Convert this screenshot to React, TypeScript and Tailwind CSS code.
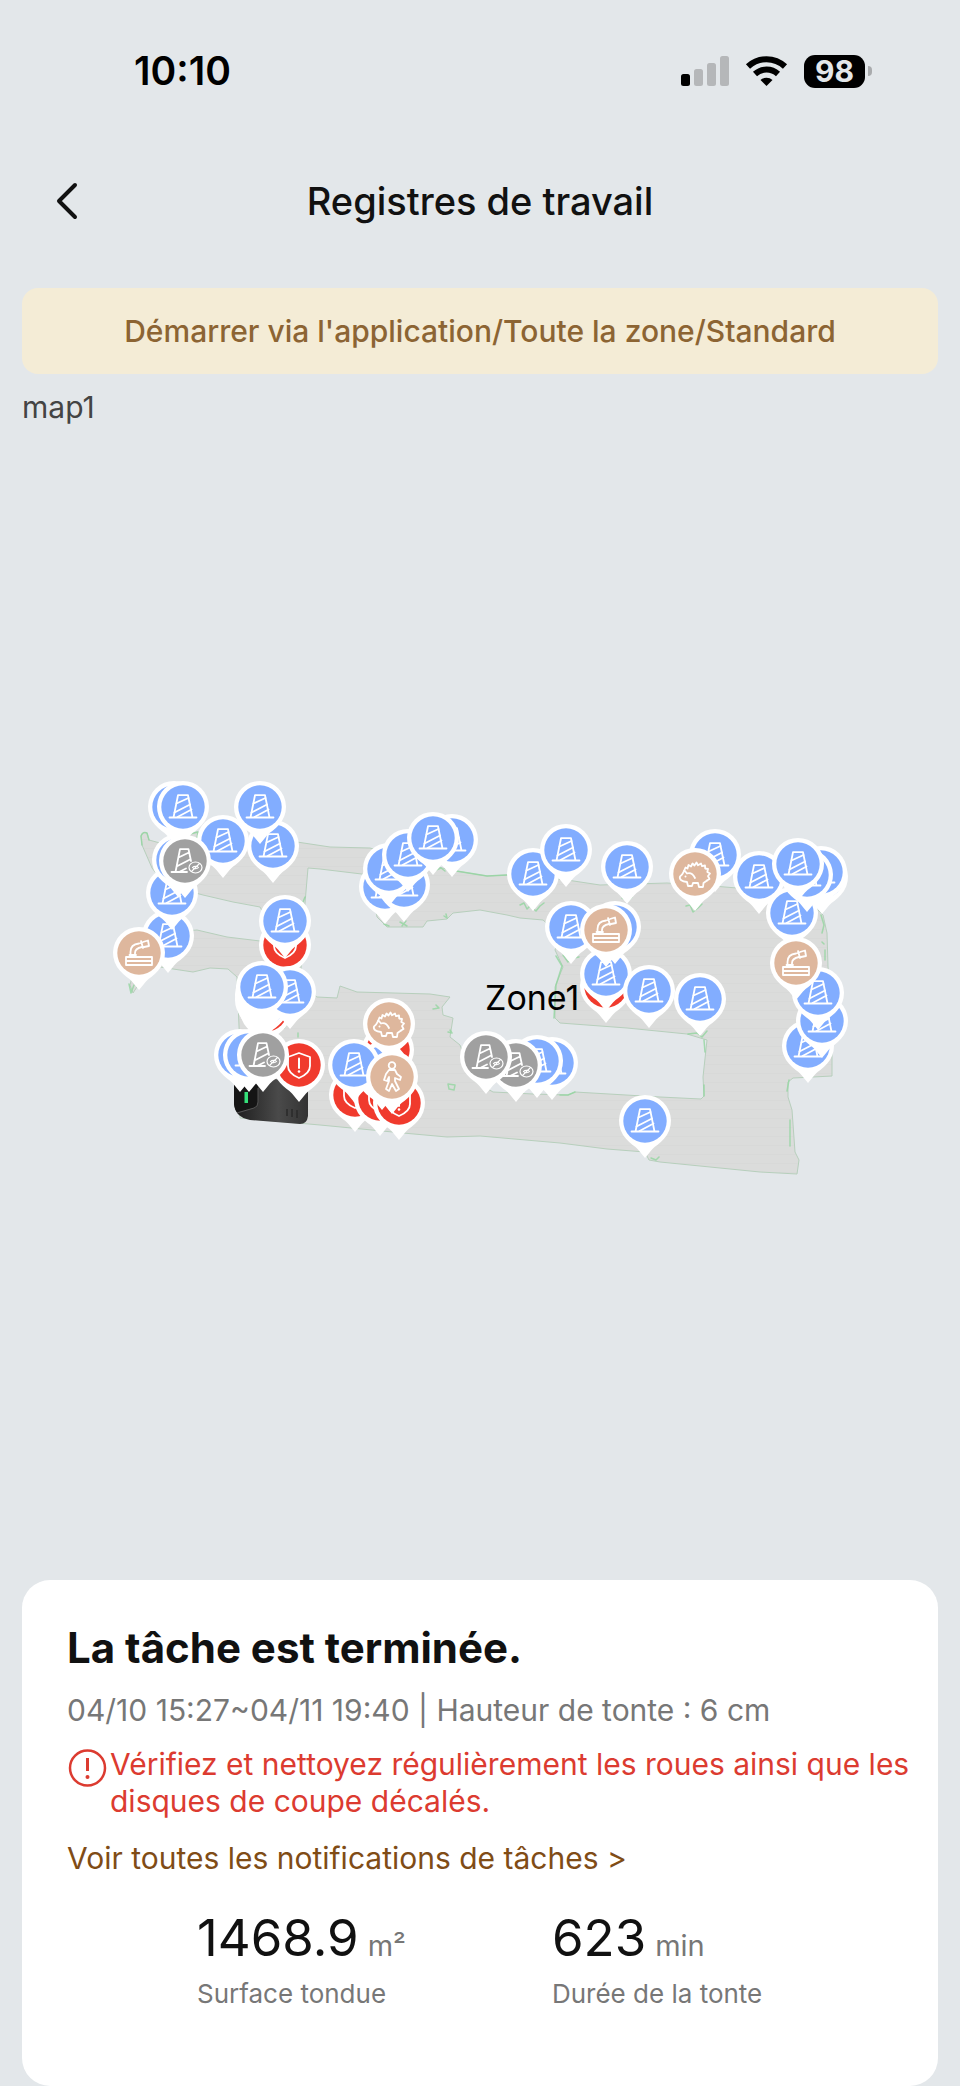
type PinKind = 'cone' | 'muted' | 'alert' | 'hose' | 'hedgehog' | 'person';

type Pin = { kind: PinKind; x: number; y: number };

const PIN_FILL: Record<PinKind, string> = {
  cone: '#82adff',
  muted: '#a0a0a0',
  alert: '#f03a2d',
  hose: '#deb79d',
  hedgehog: '#deb79d',
  person: '#deb79d',
};

// Listed from the bottom of the stack to the top.
const PINS: Pin[] = [
  { kind: 'cone', x: 174, y: 807 },
  { kind: 'cone', x: 183, y: 807 },
  { kind: 'cone', x: 223, y: 841 },
  { kind: 'cone', x: 273, y: 846 },
  { kind: 'cone', x: 260, y: 807 },
  { kind: 'cone', x: 168, y: 936 },
  { kind: 'cone', x: 172, y: 893 },
  { kind: 'cone', x: 178, y: 860 },
  { kind: 'muted', x: 185, y: 861 },
  { kind: 'hose', x: 139, y: 953 },
  { kind: 'alert', x: 285, y: 945 },
  { kind: 'cone', x: 285, y: 921 },
  { kind: 'alert', x: 266, y: 1010 },
  { kind: 'cone', x: 263, y: 1004 },
  { kind: 'cone', x: 261, y: 1000 },
  { kind: 'cone', x: 261, y: 995 },
  { kind: 'cone', x: 262, y: 991 },
  { kind: 'cone', x: 290, y: 992 },
  { kind: 'cone', x: 262, y: 987 },
  { kind: 'alert', x: 299, y: 1065 },
  { kind: 'cone', x: 240, y: 1055 },
  { kind: 'cone', x: 249, y: 1055 },
  { kind: 'muted', x: 263, y: 1055 },
  { kind: 'alert', x: 388, y: 1050 },
  { kind: 'alert', x: 355, y: 1095 },
  { kind: 'alert', x: 380, y: 1099 },
  { kind: 'alert', x: 399, y: 1103 },
  { kind: 'cone', x: 382, y: 1073 },
  { kind: 'cone', x: 382, y: 1068 },
  { kind: 'cone', x: 354, y: 1065 },
  { kind: 'hedgehog', x: 389, y: 1024 },
  { kind: 'person', x: 392, y: 1077 },
  { kind: 'cone', x: 385, y: 887 },
  { kind: 'cone', x: 404, y: 885 },
  { kind: 'cone', x: 389, y: 869 },
  { kind: 'cone', x: 408, y: 855 },
  { kind: 'cone', x: 452, y: 840 },
  { kind: 'cone', x: 433, y: 838 },
  { kind: 'cone', x: 533, y: 874 },
  { kind: 'cone', x: 566, y: 850 },
  { kind: 'cone', x: 627, y: 867 },
  { kind: 'cone', x: 552, y: 1063 },
  { kind: 'cone', x: 537, y: 1061 },
  { kind: 'muted', x: 516, y: 1065 },
  { kind: 'muted', x: 486, y: 1057 },
  { kind: 'alert', x: 606, y: 986 },
  { kind: 'cone', x: 606, y: 974 },
  { kind: 'cone', x: 571, y: 927 },
  { kind: 'cone', x: 615, y: 927 },
  { kind: 'hose', x: 606, y: 930 },
  { kind: 'cone', x: 649, y: 991 },
  { kind: 'cone', x: 700, y: 999 },
  { kind: 'cone', x: 715, y: 855 },
  { kind: 'hedgehog', x: 695, y: 874 },
  { kind: 'cone', x: 759, y: 877 },
  { kind: 'cone', x: 792, y: 913 },
  { kind: 'cone', x: 822, y: 877 },
  { kind: 'cone', x: 821, y: 872 },
  { kind: 'cone', x: 807, y: 875 },
  { kind: 'cone', x: 798, y: 864 },
  { kind: 'cone', x: 808, y: 1046 },
  { kind: 'cone', x: 822, y: 1021 },
  { kind: 'cone', x: 818, y: 993 },
  { kind: 'hose', x: 796, y: 963 },
  { kind: 'cone', x: 645, y: 1121 },
];

function ConeGlyph() {
  return (
    <>
      <path d="M-13.500 10.500H13.500M-9.500 10.500L-5 -11.800H5L9.500 10.500" />
      <path d="M-6.500 -3.500L5.500 -9M-8.500 5.500L7 -2.500M-5.500 10L8.500 2.500" />
    </>
  );
}

function PinGlyph({ kind }: { kind: PinKind }) {
  switch (kind) {
    case 'cone':
      return <ConeGlyph />;
    case 'muted':
      return (
        <>
          <path d="M-13.500 11H2M-9.500 11L-5 -11.800H3.500L6 0M-6.500 -3.500L4 -8.500M-8.500 5.500L5 -1.500M-5 10.500L1 7.500" />
          <ellipse cx="10.500" cy="6.500" rx="6.500" ry="5.500" strokeWidth="1.200" />
          <path d="M7.500 6.500a3.500 2.500 0 0 1 6 0a3.500 2.500 0 0 1 -6 0M6.500 10.500L14.500 2.500" strokeWidth="1.100" />
        </>
      );
    case 'alert':
      return (
        <>
          <path d="M0 -12L11 -8V1C11 7 6 10.500 0 13C-6 10.500 -11 7 -11 1V-8Z" />
          <path d="M0 -6.500V3" strokeWidth="2" />
          <circle cx="0" cy="6.500" r="1.300" fill="#fff" stroke="none" />
        </>
      );
    case 'hose':
      return (
        <>
          <path d="M-13 4H13V12H-13ZM-13 8H13" />
          <path d="M-8.500 4V-1C-8.500 -6 -5 -9 0 -9.500L2 -10M-4 3V0C-4 -3 -2 -5 3 -6M-9.500 2H-3" />
          <path d="M2 -12L4 -5M4 -11L9 -12.500L10 -7L5 -6" />
        </>
      );
    case 'hedgehog':
      return (
        <>
          <path d="M-11 -3L-9.500 -6.500L-7.500 -5.500L-6.500 -9L-4 -7.500L-2.500 -10.500L-0.500 -8.500L1.500 -11.500L3 -8.800L6 -10.500L7 -7.800L10 -8.500L10.200 -5.500L13 -5L12.300 -2L15 -0.500L13 2L14.500 5L12 6.500" />
          <path d="M-11 -3C-12 -1 -12.500 1 -15 2.500C-16 5.500 -13 7.500 -8 8L-7 12H-3L-2 9H3L4 13H8L8.500 9L12 6.500M-10 -3L-8 -0.500C-5 -1.500 -2 0 0 4" />
          <circle cx="-9.500" cy="2.500" r="1" fill="#fff" stroke="none" />
        </>
      );
    case 'person':
      return (
        <>
          <circle cx="0" cy="-11.500" r="3.300" />
          <path d="M-3 -7H3L5 -3L9 0L8 3L3 1V4L7 12L4 14L0 7L-3 14L-6 12L-3 4V0L-5 4L-8 3L-6 -3Z" />
        </>
      );
  }
}

function MapPin({ kind, x, y }: Pin) {
  return (
    <g transform={`translate(${x} ${y})`}>
      <path
        d="M0 37L-7 28.500C-10 25 -15 22.500 -19 17.700A26 26 0 1 1 19 17.700C15 22.500 10 25 7 28.500Z"
        fill="#fff"
      />
      <circle r="21.700" fill={PIN_FILL[kind]} />
      <g fill="none" stroke="#fff" strokeWidth="1.800" strokeLinejoin="round" strokeLinecap="round">
        <PinGlyph kind={kind} />
      </g>
    </g>
  );
}

function Dock() {
  return (
    <g>
      <path d="M238 1078L302 1080Q308 1081 308 1088V1116Q307 1124 300 1124L250 1120Q235 1117 234 1104V1088Q234 1080 238 1078Z" fill="url(#dock)" />
      <path d="M238 1080H258V1102Q258 1107 254 1108L237 1112Q234 1108 234 1100V1088Q234 1080 238 1080Z" fill="#151515" />
      <path d="M258 1088V1102Q258 1107 254 1108L237 1113" fill="none" stroke="#555" strokeWidth="1" />
      <rect x="244.500" y="1092" width="3.500" height="11" fill="#35e07a" />
      <path d="M287 1109V1116M292 1109V1117M297 1110V1118" stroke="#2a2a2a" strokeWidth="1.500" />
    </g>
  );
}

function WorkMap() {
  return (
    <svg viewBox="0 430 960 1150" className="block w-full" role="img" aria-label="map1">
      <defs>
        <pattern id="rows" width="960" height="9" patternUnits="userSpaceOnUse">
          <rect width="960" height="9" fill="#dbdcdb" />
          <path d="M0 2.500H960" stroke="#d8d9d8" strokeWidth="1" />
        </pattern>
        <linearGradient id="dock" x1="0" y1="0" x2="1" y2="0">
          <stop offset="0" stopColor="#1c1c1c" />
          <stop offset="0.600" stopColor="#4a4a4a" />
          <stop offset="1" stopColor="#333" />
        </linearGradient>
      </defs>
      <path
        fillRule="evenodd"
        fill="url(#rows)"
        stroke="#b7cfbc"
        strokeWidth="1"
        strokeLinejoin="round"
        d="M142 845L141 836Q143 831 147 833L149 840L160 843L170 838L197 832L247 840L297 842L330 847L370 848L420 862L450 870L487 876L507 875L567 880L600 885L667 883L713 886L737 888L790 895L813 905L823 915L827 933L828 967L832 1003V1076L813 1077L793 1078L788 1082V1097L792 1110L795 1152L799 1160L797 1174L760 1172L660 1162L649 1160L645 1152L607 1149L560 1143L480 1136L447 1137L403 1133L320 1125L240 1118L240 1050L237 977L228 969L210 968L193 972L160 967L150 967L133 993L130 985L140 945L160 933L197 930L227 937L260 941L270 925L260 907L233 902L203 895L165 885L152 868Z
        M308 868L320 869L370 875L377 917L387 927H423L427 921L447 919L453 913L480 910L507 915L520 918L543 920L560 935L555 950L563 967L555 987V1018L560 1023L627 1028L687 1034L707 1040L703 1077L704 1096L701 1099L660 1097L575 1092L568 1095L533 1094L493 1092L473 1080L460 1045L450 1037L453 1018L443 1015L442 1007L450 997L430 994L357 992L340 986L337 998L317 997L300 985L305 903Z"
      />
      <g fill="none" stroke="#93d6a0" strokeWidth="1.500" strokeLinecap="round" strokeLinejoin="round" opacity="0.800">
        <path d="M142 845L141 836Q143 831 147 833L149 840M190 834L198 832L197 838M129 984L131 993L134 985" />
        <path d="M450 870L487 876L507 875M436 870L441 868L445 871M384 924L389 926M400 922L407 926M402 926L406 921M444 916L447 918L446 914" />
        <path d="M520 905L524 903L527 909L530 906L536 911L540 906L544 903M563 955L568 962L574 958L579 957" />
        <path d="M686 906L690 905L693 912L698 908L702 904M622 898L628 901L632 897M688 1034L697 1033L702 1037L707 1031" />
        <path d="M821 915L824 925L822 933M822 942L824 944M825 950V960M789 1080L787 1091M790 1120V1146M651 1158L656 1160L659 1157" />
        <path d="M433 1009L439 1008L436 1005M448 1032L452 1033L450 1030M448 1084L455 1085L454 1090L449 1089ZM284 1028L287 1024M298 1033V1037M305 897L303 902" />
        <path d="M556 956L562 966L556 985L554 1018M560 1095L568 1095L575 1092M704 1040L705 1052M704 1085V1096" />
      </g>
      <Dock />
      {PINS.map((pin, i) => (
        <MapPin key={i} {...pin} />
      ))}
      <text x="485" y="1010" fontSize="34" fill="#000" className="font-['Inter',sans-serif]">
        Zone1
      </text>
    </svg>
  );
}

function StatusBar() {
  return (
    <div className="flex h-[142px] items-center justify-between pl-[134px] pr-[88px]">
      <span className="text-[39px] leading-[48px] font-semibold text-black">10:10</span>
      <div className="flex items-center gap-4">
        <svg width="48" height="32" viewBox="0 0 48 32" aria-hidden="true">
          <rect x="0" y="19" width="9" height="12" rx="2.500" fill="#000" />
          <rect x="13" y="14" width="9" height="17" rx="2.500" fill="#b5b7b9" />
          <rect x="26" y="8" width="9" height="23" rx="2.500" fill="#b5b7b9" />
          <rect x="39" y="1" width="9" height="30" rx="2.500" fill="#b5b7b9" />
        </svg>
        <svg width="43" height="32" viewBox="0 0 43 32" aria-hidden="true">
          <path d="M3 11.500A27 27 0 0 1 40 11.500" fill="none" stroke="#000" strokeWidth="6" />
          <path d="M10 19A17 17 0 0 1 33 19" fill="none" stroke="#000" strokeWidth="6" />
          <path d="M21.500 31L15.500 25A9 9 0 0 1 27.500 25Z" fill="#000" />
        </svg>
        <div className="flex items-center gap-[3px]">
          <span className="flex h-[33px] w-[61px] items-center justify-center rounded-[11px] bg-black text-[30px] leading-none font-bold text-[#e3e7ea]">
            98
          </span>
          <span className="h-[10px] w-[4px] rounded-r-full bg-[#a9abad]" />
        </div>
      </div>
    </div>
  );
}

function Stat({ value, unit, label }: { value: string; unit: string; label: string }) {
  return (
    <div className="flex flex-col-reverse gap-[9px]">
      <dt className="text-[26px] leading-[34px] text-[#777]">{label}</dt>
      <dd className="flex items-baseline gap-[9px]">
        <span className="text-[51px] leading-[60px] text-[#111]">{value}</span>
        <span className="text-[29px] leading-[36px] text-[#777]">{unit}</span>
      </dd>
    </div>
  );
}

export default function App() {
  return (
    <div className="flex min-h-screen flex-col bg-[#e3e7ea] font-['Inter',sans-serif]">
      <StatusBar />
      <header className="grid grid-cols-[1fr_auto_1fr] items-center px-[52px] py-9">
        <button type="button" aria-label="Retour" className="justify-self-start">
          <svg width="30" height="40" viewBox="0 0 30 40" fill="none" stroke="#111" strokeWidth="4" strokeLinecap="round" strokeLinejoin="round">
            <path d="M23 4L7 20L23 36" />
          </svg>
        </button>
        <h1 className="text-[38px] leading-[46px] font-medium text-[#111]">Registres de travail</h1>
      </header>
      <main className="flex flex-1 flex-col px-[22px]">
        <p className="mt-7 rounded-[16px] bg-[#f4ecd6] px-4 py-6 text-center text-[30px] leading-[38px] font-medium text-[#8c6433]">
          Démarrer via l'application/Toute la zone/Standard
        </p>
        <h2 className="mt-[14px] mb-1 text-[30px] leading-[38px] text-[#444]">map1</h2>
        <div className="-mx-[22px]">
          <WorkMap />
        </div>
        <section className="flex-1 rounded-[28px] bg-white pr-5 pl-[45px] pt-[41px] pb-16">
          <h2 className="text-[42px] leading-[54px] font-bold text-[#111]">La tâche est terminée.</h2>
          <p className="mt-4 text-[30px] leading-[38px] text-[#777]">
            04/10 15:27~04/11 19:40 | Hauteur de tonte : 6 cm
          </p>
          <div className="mt-[17px] flex text-[#dc3b30]">
            <svg width="43" height="42" viewBox="0 0 43 42" className="shrink-0" fill="none" stroke="currentColor" strokeWidth="2.500" aria-hidden="true">
              <circle cx="20.500" cy="22" r="17.500" />
              <path d="M20.500 12V25" strokeWidth="3" />
              <circle cx="20.500" cy="31" r="2" fill="currentColor" stroke="none" />
            </svg>
            <p className="text-[30px] leading-[37px]">
              Vérifiez et nettoyez régulièrement les roues ainsi que les disques de coupe décalés.
            </p>
          </div>
          <a href="#notifications" className="mt-[19px] block text-[30px] leading-[38px] text-[#804c16]">
            Voir toutes les notifications de tâches &gt;
          </a>
          <dl className="mt-[31px] flex gap-[146px] pl-[130px]">
            <Stat value="1468.9" unit="m²" label="Surface tondue" />
            <Stat value="623" unit="min" label="Durée de la tonte" />
          </dl>
        </section>
      </main>
    </div>
  );
}
